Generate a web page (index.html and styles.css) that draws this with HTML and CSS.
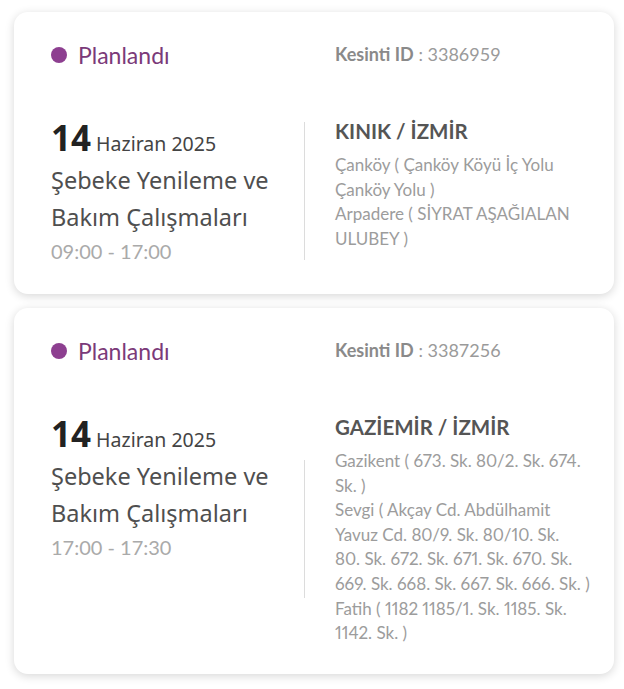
FILE: index.html
```html
<!DOCTYPE html>
<html lang="tr">
<head>
<meta charset="utf-8">
<link rel="stylesheet" href="styles.css">
</head>
<body>
<div class="list">
  <div class="card">
    <div class="status"><span class="dot"></span>Planlandı</div>
    <div class="cid"><b>Kesinti ID</b> : 3386959</div>
    <div class="left">
      <div class="date"><span class="day">14</span> Haziran 2025</div>
      <div class="title">Şebeke Yenileme ve Bakım Çalışmaları</div>
      <div class="time">09:00 - 17:00</div>
    </div>
    <div class="divider"></div>
    <div class="right">
      <div class="place">KINIK / İZMİR</div>
      <div class="addr">Çanköy ( Çanköy Köyü İç Yolu<br>Çanköy Yolu )</div>
      <div class="addr">Arpadere ( SİYRAT AŞAĞIALAN<br>ULUBEY )</div>
    </div>
  </div>
  <div class="card">
    <div class="status"><span class="dot"></span>Planlandı</div>
    <div class="cid"><b>Kesinti ID</b> : 3387256</div>
    <div class="left">
      <div class="date"><span class="day">14</span> Haziran 2025</div>
      <div class="title">Şebeke Yenileme ve Bakım Çalışmaları</div>
      <div class="time">17:00 - 17:30</div>
    </div>
    <div class="divider"></div>
    <div class="right">
      <div class="place">GAZİEMİR / İZMİR</div>
      <div class="addr">Gazikent ( 673. Sk. 80/2. Sk. 674.<br>Sk. )</div>
      <div class="addr">Sevgi ( Akçay Cd. Abdülhamit<br>Yavuz Cd. 80/9. Sk. 80/10. Sk.<br>80. Sk. 672. Sk. 671. Sk. 670. Sk.<br>669. Sk. 668. Sk. 667. Sk. 666. Sk. )</div>
      <div class="addr">Fatih ( 1182 1185/1. Sk. 1185. Sk.<br>1142. Sk. )</div>
    </div>
  </div>
</div>
</body>
</html>
```
FILE: styles.css
```css
* { box-sizing: border-box; }
body {
  margin: 0;
  background: #ffffff;
  font-family: "Lato", "Liberation Sans", sans-serif;
}
.list {
  padding: 12px 10px 16px 14px;
  display: flex;
  flex-direction: column;
  gap: 14px;
}
.card {
  width: 600px;
  background: #fff;
  border-radius: 14px;
  box-shadow: 0 2px 10px rgba(0,0,0,0.16);
  padding: 30px 20px 28px 37px;
  display: grid;
  grid-template-columns: 253px 1px 1fr;
  grid-template-rows: auto auto;
  row-gap: 48px;
}
.status {
  grid-column: 1;
  display: flex;
  align-items: center;
  gap: 11px;
  height: 26px;
  font-size: 23px;
  color: #7b3a79;
}
.dot {
  width: 16px;
  height: 16px;
  border-radius: 50%;
  background: #8d3f90;
}
.cid {
  grid-column: 3;
  padding-left: 30px;
  font-size: 18px;
  line-height: 24px;
  color: #9a9a9a;
}
.cid b { color: #8a8a8a; font-weight: 700; }
.left { grid-column: 1; }
.date {
  font-family: "Noto Sans", sans-serif;
  font-size: 19.5px;
  line-height: 40px;
  color: #444;
  margin-top: 2px;
}
.day {
  font-size: 35px;
  font-weight: 700;
  color: #222;
}
.title {
  font-family: "Noto Sans", sans-serif;
  font-size: 23.5px;
  line-height: 37px;
  color: #4f4f4f;
  margin-top: -2px;
}
.time {
  font-size: 20px;
  line-height: 30px;
  color: #aaa;
}
.divider {
  grid-column: 2;
  align-self: center;
  height: 138px;
  background: #dcdcdc;
}
.right {
  grid-column: 3;
  padding-left: 30px;
}
.place {
  font-size: 20.5px;
  font-weight: 700;
  line-height: 30px;
  color: #555;
  margin-bottom: 7px;
}
.addr {
  font-size: 17px;
  line-height: 24.6px;
  color: #9c9c9c;
  white-space: nowrap;
  font-variant-numeric: proportional-nums;
}
```
